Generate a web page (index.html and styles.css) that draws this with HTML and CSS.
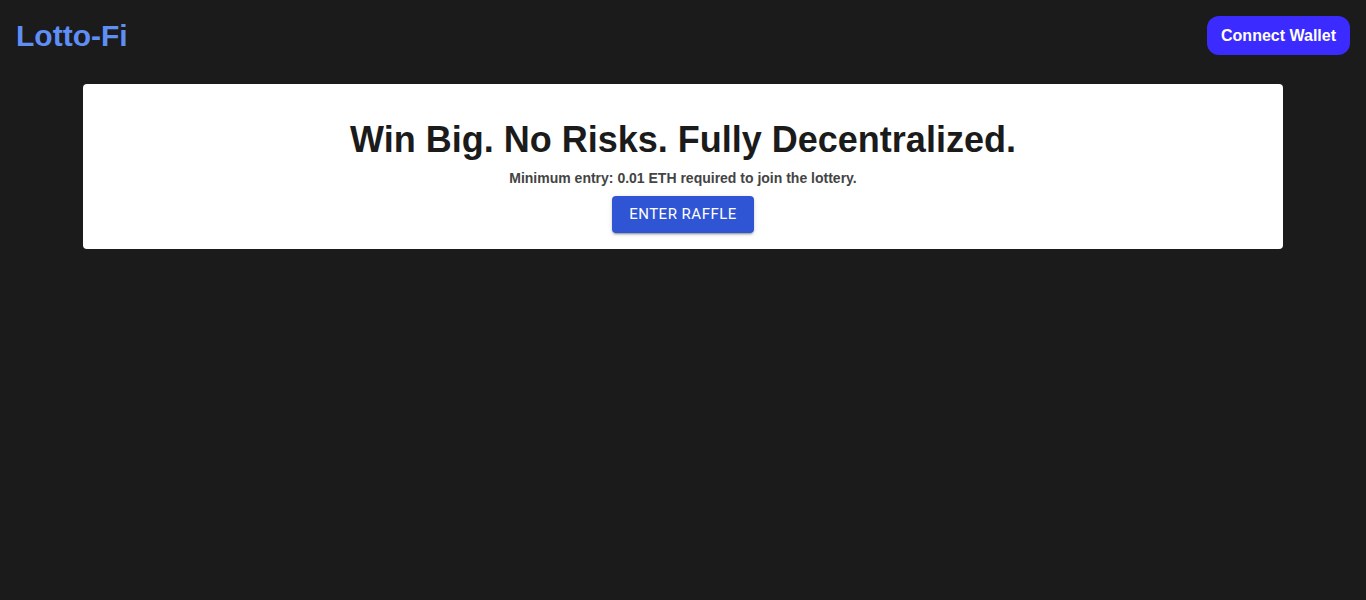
FILE: index.html
```html
<!DOCTYPE html>
<html>
<head>
<meta charset="utf-8">
<link rel="stylesheet" href="styles.css">
<title>Lotto-Fi</title>
</head>
<body>
<header class="topbar">
  <div class="logo">Lotto-Fi</div>
  <button class="connect">Connect Wallet</button>
</header>
<main class="main">
  <section class="card">
    <h1 class="headline">Win Big. No Risks. Fully Decentralized.</h1>
    <p class="subtitle">Minimum entry: 0.01 ETH required to join the lottery.</p>
    <button class="enter">ENTER RAFFLE</button>
  </section>
</main>
</body>
</html>
```
FILE: styles.css
```css
* { box-sizing: border-box; }
html, body { margin: 0; padding: 0; }
body {
  background: #1b1b1b;
  font-family: "Liberation Sans", Arial, sans-serif;
  min-height: 600px;
}
.topbar {
  display: flex;
  justify-content: space-between;
  align-items: flex-start;
  padding: 16px 16px 0 16px;
  height: 71px;
}
.logo {
  color: #5f8ff5;
  font-weight: bold;
  font-size: 30px;
  line-height: 40px;
}
.connect {
  background: #3b2bff;
  color: #fff;
  border: none;
  border-radius: 12px;
  font-family: "Liberation Sans", Arial, sans-serif;
  font-weight: bold;
  font-size: 16px;
  height: 39px;
  padding: 0 14px;
}
.main {
  display: flex;
  justify-content: center;
  padding-top: 13px;
}
.card {
  width: 1200px;
  background: #fff;
  border-radius: 4px;
  padding: 16px;
  display: flex;
  flex-direction: column;
  align-items: center;
}
.headline {
  margin: 18px 0 0 0;
  font-size: 36px;
  line-height: 44px;
  color: #1b1b1b;
}
.subtitle {
  margin: 6px 0 0 0;
  font-size: 14px;
  font-weight: bold;
  color: #444;
  line-height: 20px;
}
.enter {
  margin-top: 8px;
  background: #2f55d4;
  color: #fff;
  border: none;
  border-radius: 4px;
  font-family: Roboto, sans-serif;
  font-weight: 400;
  font-size: 15px;
  letter-spacing: 0.5px;
  height: 37px;
  width: 142px;
  padding: 0 0 2px 0;
  box-shadow: 0 3px 1px -2px rgba(0,0,0,0.2), 0 2px 2px 0 rgba(0,0,0,0.14), 0 1px 5px 0 rgba(0,0,0,0.12);
}
```
